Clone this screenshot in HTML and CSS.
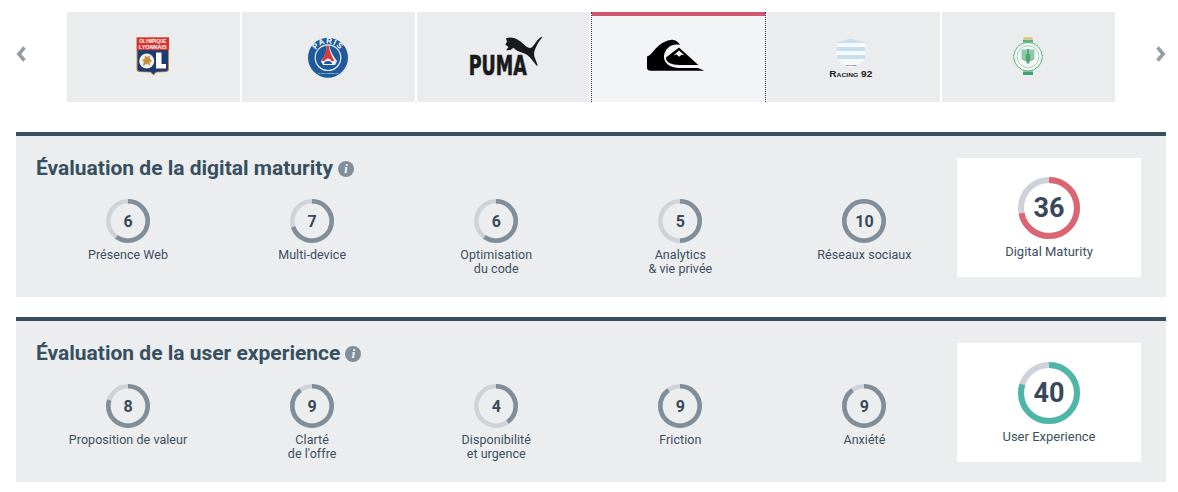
FILE: index.html
```html
<!DOCTYPE html>
<html lang="fr">
<head>
<meta charset="utf-8">
<title>Évaluation</title>
<link rel="stylesheet" href="styles.css">
</head>
<body>
<div class="carousel">
  <div class="arrow arrow-prev"><svg width="10" height="16" viewBox="0 0 10 16"><path d="M8.500 1.500 2.800 8l5.700 6.500" class="chev"/></svg></div>
  <div class="tiles">
    <div class="tile">
      <svg class="logo" viewBox="0 0 173 90"><g transform="translate(-67 -12)">
        <path d="M136.600 50h32.400v19.500q0 2.200-2.500 2.600l-10 .4-3 3-3-3-11-.4q-3-.4-3-2.600z" fill="#c08a3e"/>
        <path d="M137.600 50h30.400v19q0 2-2 2.200l-10 .6-2.600 2.400-2.600-2.400-11-.6q-2.200-.2-2.200-2.200z" fill="#1c3a78"/>
        <rect x="136.600" y="37.300" width="32.400" height="12.900" fill="#d8342a"/>
        <text x="152.800" y="43" class="ol-text" textLength="27" lengthAdjust="spacingAndGlyphs">OLYMPIQUE</text>
        <text x="152.800" y="48.500" class="ol-text" textLength="28" lengthAdjust="spacingAndGlyphs">LYONNAIS</text>
        <circle cx="146.700" cy="61" r="7.500" fill="#f2efe6"/>
        <path d="M142.500 66l1.500-4-2-2 2.500-1 .5-3.500 2 1.500 2.500-1.500.5 3.500 2 2-2.500 1.500 .5 3.500-2.500-2.500z" fill="#c4913f"/>
        <path d="M156 52.500h5.500v11.500h4.500v4.500h-10z" fill="#fff"/>
      </g></svg>
    </div>
    <div class="tile">
      <svg class="logo" viewBox="0 0 173 90"><g transform="translate(-242 -12)">
        <circle cx="328" cy="57.700" r="20" fill="#1f5a9a"/>
        <circle cx="328" cy="57.700" r="12.800" fill="#1f5a9a" stroke="#e8eef4" stroke-width="1.200"/>
        <path id="psg-arc" d="M313.700 57.700a14.300 14.300 0 0 1 28.600 0" fill="none"/>
        <text class="psg-text"><textPath href="#psg-arc" startOffset="50%">PARIS</textPath></text>
        <path d="M326.600 45.500h2.800q.8 7 7.600 15.500 l-2 4h-12l-2-4q6.800-8.500 5.600-15.500z" fill="#f3f4f6"/>
        <path d="M327 46h2q.5 7 5.500 15h-3q-1.200-2.500-3.500-2.500T324.500 61h-3q5-8 5.500-15z" fill="#d83a40"/>
        <path d="M324 64a4 3 0 0 1 8 0z" fill="#1f5a9a"/>
        <text x="328" y="73.500" class="psg-sub" textLength="20" lengthAdjust="spacingAndGlyphs">SAINT-GERMAIN</text>
      </g></svg>
    </div>
    <div class="tile">
      <svg class="logo" viewBox="0 0 173 90"><g transform="translate(-417 -12)">
        <text x="468.800" y="74.800" class="puma-text" textLength="58" lengthAdjust="spacingAndGlyphs">PUMA</text>
        <path d="M505.300 44.500l1.700-2.800-1-3.500 3.500-.7c5-.5 10.500 3 14.500 7 3 3 6 4.300 8 2.800 3-3 4.700-7.500 9.300-10.500l.7 1c-3.700 3.700-5.500 8.200-7 11.700-1.300 3-1.200 6 0 8.800l2.700 7-1 .4-5.400-6.700c-2.800-3.500-5-5.300-9-6.300-4-1-6.800-3-8.800-5l-3 2.300-4.500.2 2.500-3.200z" fill="#1a1a1a"/>
      </g></svg>
    </div>
    <div class="tile tile-active">
      <svg class="logo" viewBox="0 0 173 90"><g transform="translate(-592 -12)">
        <path d="M647 70.800V56.500l3-1.500c5-5 10-13.800 22-15.200 3.500-.2 6 2 8 5.200-8-2-14.800 3-16 10.800-.7 7 5.500 11.700 14 12.200h20l6.400 2.800H651q-4 0-4-3z" fill="#000"/>
        <path d="M679 47.600 698.300 65H680c-9 0-14.500-3-14-7.500z" fill="#000"/>
        <path d="M679 50.500l5.300 4.800-2.800-.5-2.300 2-2.700-2.200-3 .8z" fill="#f4f5f7"/>
      </g></svg>
    </div>
    <div class="tile">
      <svg class="logo" viewBox="0 0 173 90"><g transform="translate(-767 -12)">
        <path d="M836.500 42q8-1 14.300-3.700 7 2.700 14.800 3.700l-.5 14q-1 8-14.300 12-13.300-4-14.300-12z" fill="#f6f8fa"/>
        <path d="M836.500 42q8-1 14.300-3.700 7 2.700 14.800 3.700v1h-29.100z" fill="#c6dff1"/>
        <rect x="836.700" y="47" width="28.700" height="4" fill="#c6dff1"/>
        <rect x="837" y="55" width="28" height="4" fill="#c6dff1"/>
        <text x="851" y="65.500" class="racing-sub" textLength="11" lengthAdjust="spacingAndGlyphs">Paris 1882</text>
        <text x="850.800" y="76.500" class="racing-text" textLength="43" lengthAdjust="spacingAndGlyphs">Racing 92</text>
      </g></svg>
    </div>
    <div class="tile">
      <svg class="logo" viewBox="0 0 173 90"><g transform="translate(-942 -12)">
        <rect x="1023.500" y="37.300" width="9" height="2.500" fill="#d4c777"/>
        <rect x="1023" y="40" width="10" height="2.500" fill="#5bb083"/>
        <circle cx="1028" cy="56.700" r="14.300" fill="#f3f6f4" stroke="#5bb083" stroke-width="1"/>
        <circle cx="1028" cy="56.700" r="11" fill="none" stroke="#a5d4b8" stroke-width="1"/>
        <path d="M1021.500 49.500h5v9l-1.500 3-3.500-2.500zM1034.500 49.500h-5v9l1.500 3 3.500-2.500z" fill="#8fc9a7"/>
        <path d="M1026.700 49h2.600v5l1 .5v6l-1.500 3h-1.600l-1.500-3v-6l1-.5z" fill="#4fa578"/>
        <rect x="1023" y="71.500" width="10" height="3.500" fill="#3fa26e"/>
      </g></svg>
    </div>
  </div>
  <div class="arrow arrow-next"><svg width="10" height="16" viewBox="0 0 10 16"><path d="M1.500 1.500 7.200 8l-5.700 6.500" class="chev"/></svg></div>
</div>

<section class="panel">
  <div class="panel-main">
    <h2 class="panel-title">Évaluation de la digital maturity <span class="info">i</span></h2>
    <div class="gauges">
      <div class="gauge-item"><div class="gauge"><svg viewBox="0 0 44 44"><circle class="track" cx="22" cy="22" r="19.700"/><circle class="bar" cx="22" cy="22" r="19.700" pathLength="100" stroke-dasharray="60 100"/></svg><span class="num">6</span></div><p class="label">Présence Web</p></div>
      <div class="gauge-item"><div class="gauge"><svg viewBox="0 0 44 44"><circle class="track" cx="22" cy="22" r="19.700"/><circle class="bar" cx="22" cy="22" r="19.700" pathLength="100" stroke-dasharray="70 100"/></svg><span class="num">7</span></div><p class="label">Multi-device</p></div>
      <div class="gauge-item"><div class="gauge"><svg viewBox="0 0 44 44"><circle class="track" cx="22" cy="22" r="19.700"/><circle class="bar" cx="22" cy="22" r="19.700" pathLength="100" stroke-dasharray="60 100"/></svg><span class="num">6</span></div><p class="label">Optimisation<br>du code</p></div>
      <div class="gauge-item"><div class="gauge"><svg viewBox="0 0 44 44"><circle class="track" cx="22" cy="22" r="19.700"/><circle class="bar" cx="22" cy="22" r="19.700" pathLength="100" stroke-dasharray="50 100"/></svg><span class="num">5</span></div><p class="label">Analytics<br>&amp; vie privée</p></div>
      <div class="gauge-item"><div class="gauge"><svg viewBox="0 0 44 44"><circle class="track" cx="22" cy="22" r="19.700"/><circle class="bar" cx="22" cy="22" r="19.700" pathLength="100" stroke-dasharray="100 100"/></svg><span class="num">10</span></div><p class="label">Réseaux sociaux</p></div>
    </div>
  </div>
  <div class="score">
    <div class="gauge gauge-big"><svg viewBox="0 0 62 62"><circle class="track" cx="31" cy="31" r="28"/><circle class="bar bar-red" cx="31" cy="31" r="28" pathLength="100" stroke-dasharray="72 100"/></svg><span class="num">36</span></div>
    <p class="score-label">Digital Maturity</p>
  </div>
</section>

<section class="panel">
  <div class="panel-main">
    <h2 class="panel-title">Évaluation de la user experience <span class="info">i</span></h2>
    <div class="gauges">
      <div class="gauge-item"><div class="gauge"><svg viewBox="0 0 44 44"><circle class="track" cx="22" cy="22" r="19.700"/><circle class="bar" cx="22" cy="22" r="19.700" pathLength="100" stroke-dasharray="80 100"/></svg><span class="num">8</span></div><p class="label">Proposition de valeur</p></div>
      <div class="gauge-item"><div class="gauge"><svg viewBox="0 0 44 44"><circle class="track" cx="22" cy="22" r="19.700"/><circle class="bar" cx="22" cy="22" r="19.700" pathLength="100" stroke-dasharray="90 100"/></svg><span class="num">9</span></div><p class="label">Clarté<br>de l'offre</p></div>
      <div class="gauge-item"><div class="gauge"><svg viewBox="0 0 44 44"><circle class="track" cx="22" cy="22" r="19.700"/><circle class="bar" cx="22" cy="22" r="19.700" pathLength="100" stroke-dasharray="40 100"/></svg><span class="num">4</span></div><p class="label">Disponibilité<br>et urgence</p></div>
      <div class="gauge-item"><div class="gauge"><svg viewBox="0 0 44 44"><circle class="track" cx="22" cy="22" r="19.700"/><circle class="bar" cx="22" cy="22" r="19.700" pathLength="100" stroke-dasharray="90 100"/></svg><span class="num">9</span></div><p class="label">Friction</p></div>
      <div class="gauge-item"><div class="gauge"><svg viewBox="0 0 44 44"><circle class="track" cx="22" cy="22" r="19.700"/><circle class="bar" cx="22" cy="22" r="19.700" pathLength="100" stroke-dasharray="90 100"/></svg><span class="num">9</span></div><p class="label">Anxiété</p></div>
    </div>
  </div>
  <div class="score">
    <div class="gauge gauge-big"><svg viewBox="0 0 62 62"><circle class="track" cx="31" cy="31" r="28"/><circle class="bar bar-green" cx="31" cy="31" r="28" pathLength="100" stroke-dasharray="80 100"/></svg><span class="num">40</span></div>
    <p class="score-label">User Experience</p>
  </div>
</section>
</body>
</html>
```
FILE: styles.css
```css
* { box-sizing: border-box; }
html, body { margin: 0; background: #fff; }
body {
  padding: 12px 12px 0 16px;
  font-family: Roboto, "Liberation Sans", sans-serif;
  color: #37495a;
}
.carousel { display: flex; align-items: center; width: 1150px; }
.arrow { width: 51px; display: flex; }
.arrow-next { justify-content: flex-end; }
.arrow svg { display: block; margin-top: -7px; }
.chev { fill: none; stroke: #929da6; stroke-width: 3.5; }
.tiles { display: flex; gap: 2px; width: 1048px; }
.tile { position: relative; width: 173px; height: 90px; background: #ebecee; }
.logo { display: block; width: 173px; height: 90px; }
.tile-active { background: #f3f4f6; }
.tile-active::before {
  content: "";
  position: absolute;
  inset: 0 0 auto 0;
  height: 4px;
  background: #d0566f;
}
.tile-active::after {
  content: "";
  position: absolute;
  inset: 0 -1px 0 -1px;
  border-left: 1px dotted #3c1a58;
  border-right: 1px dotted #3c1a58;
}
.ol-text { font: 700 5px "Liberation Sans", sans-serif; fill: #fff; text-anchor: middle; }
.psg-text { font: 700 8px "Liberation Sans", sans-serif; fill: #fff; text-anchor: middle; letter-spacing: 1px; }
.psg-sub { font: 700 2.500px "Liberation Sans", sans-serif; fill: #cfe0f0; text-anchor: middle; }
.puma-text { font: 700 26px "DejaVu Sans", sans-serif; fill: #1a1a1a; stroke: #1a1a1a; stroke-width: .7px; }
.racing-text { font: 700 9px "Liberation Sans", sans-serif; font-variant: small-caps; fill: #222; text-anchor: middle; }
.racing-sub { font: 700 2.500px "Liberation Sans", sans-serif; fill: #556; text-anchor: middle; }

.panel {
  display: flex;
  width: 1150px;
  height: 165px;
  margin-top: 30px;
  padding: 0 25px 20px 20px;
  background: #ebedef;
  border-top: 4px solid #37505f;
}
.panel + .panel { margin-top: 20px; }
.panel-main { width: 921px; padding-top: 20px; }
.panel-title {
  display: flex;
  align-items: center;
  gap: 5px;
  margin: 0;
  height: 24px;
  font-size: 21px;
  line-height: 24px;
  font-weight: 700;
  color: #37505f;
}
.info {
  width: 16px;
  height: 16px;
  margin-top: 2px;
  border-radius: 50%;
  background: #7f8e99;
  color: #fff;
  font: italic 700 12px/16px "Liberation Serif", serif;
  text-align: center;
}
.gauges { display: grid; grid-template-columns: repeat(5, 1fr); width: 920.500px; margin-top: 19px; }
.gauge-item { display: flex; flex-direction: column; align-items: center; }
.gauge { display: grid; width: 44px; height: 44px; place-items: center; }
.gauge > * { grid-area: 1 / 1; }
.gauge svg { display: block; width: 100%; height: 100%; transform: rotate(-90deg); }
.track, .bar { fill: none; stroke-width: 4.600; }
.track { stroke: #cdd3d8; }
.bar { stroke: #7f8e99; }
.num { padding-top: 1px; font-size: 16px; font-weight: 700; line-height: 1; color: #37495a; }
.label { margin: 5px 0 0; font-size: 12.500px; line-height: 14px; letter-spacing: .05px; text-align: center; color: #3d4f5e; }
.score {
  display: flex;
  flex-direction: column;
  align-items: center;
  width: 184px;
  height: 119px;
  margin-top: 22px;
  padding-top: 19px;
  background: #fff;
}
.gauge-big { width: 62px; height: 62px; }
.gauge-big .track, .gauge-big .bar { stroke-width: 6; }
.bar-red { stroke: #dd6472; }
.bar-green { stroke: #4db6a8; }
.gauge-big .num { font-size: 27px; }
.score-label { margin: 6px 0 0; font-size: 13px; line-height: 14px; color: #3d4f5e; }
```
